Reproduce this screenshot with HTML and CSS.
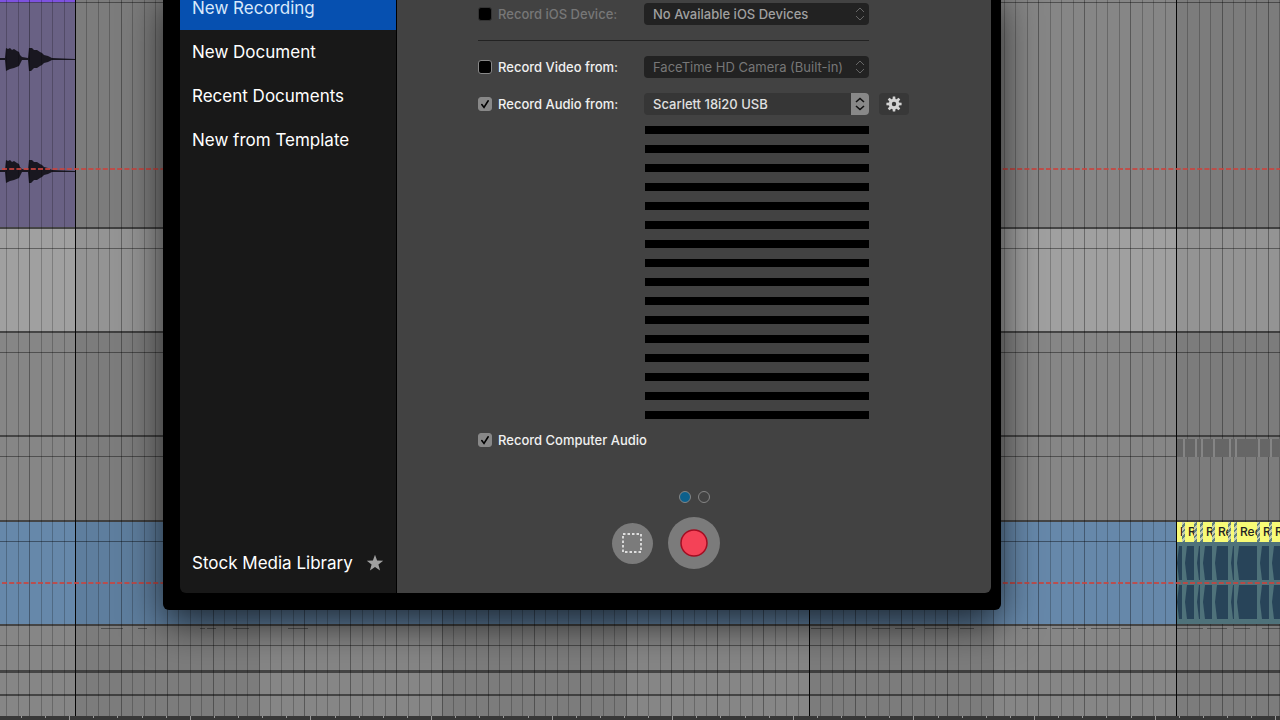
FILE: index.html
```html
<!DOCTYPE html>
<html lang="en">
<head>
	<meta charset="UTF-8">
	<meta name="viewport" content="width=device-width, initial-scale=1.0">
	<title>New Recording</title>
	<link rel="stylesheet" href="styles.css">
</head>
<body>

	<!-- arrangement behind the window -->
	<div class="arrange">
		<div class="track track--tall">
			<div class="track__head track__head--cut"></div>
			<div class="purple">
				<div class="purple__head"></div>
				<svg class="purple__wave" width="75" height="224" viewBox="0 3 75 224">
					<defs>
						<path id="wave" d="M0-1H5L6-11L8-10L10-11L12-9L14-10L17-8L19-7L20-4L22-2L28-1L29-11L32-11L34-9L37-9L40-7L42-6L44-4L48-3L52-1L75 0V1L52 1L48 3L44 4L42 6L40 7L37 9L34 9L31 12L29 12L28 1L22 1L20 5L19 7L14 9L10 10L8 11L6 12L5 1H0Z"/>
					</defs>
					<use href="#wave" y="59"/>
					<use href="#wave" y="171"/>
				</svg>
			</div>
		</div>
		<div class="track track--light"><div class="track__head"></div></div>
		<div class="track"><div class="track__head"></div></div>
		<div class="track track--mid">
			<div class="track__head"></div>
			<div class="clips clips--muted" id="muted"></div>
		</div>
		<div class="track track--blue">
			<div class="track__head"></div>
			<div class="clips" id="clips"></div>
		</div>
		<div class="track track--midi"><div class="track__head"></div></div>
		<div class="track track--short"></div>
		<div class="track track--short track--last"></div>
		<div class="arrange__foot"></div>
		<svg class="grid" id="grid"></svg>
	</div>

	<div class="window">
		<nav class="sidebar">
			<a class="sidebar__item sidebar__item--on" href="#">New Recording</a>
			<a class="sidebar__item" href="#">New Document</a>
			<a class="sidebar__item" href="#">Recent Documents</a>
			<a class="sidebar__item" href="#">New from Template</a>
			<a class="sidebar__item sidebar__item--stock" href="#">Stock Media Library
				<svg width="18" height="18" viewBox="0 0 18 18"><path fill="#a0a0a0" d="M9 .8L11.1 6.6L17.2 6.8L12.4 10.6L14.1 16.5L9 13.1L3.9 16.5L5.6 10.6L.8 6.8L6.9 6.6Z"/></svg>
			</a>
		</nav>

		<main class="panel">
			<form class="form">
				<div class="row">
					<label class="check check--off"><input type="checkbox" disabled>Record iOS Device:</label>
					<div class="pick pick--empty">
						<select disabled aria-label="iOS device"><option>No Available iOS Devices</option></select>
						<svg class="pick__arrows" viewBox="0 0 18 22"><path d="M5 9L9 5L13 9M5 13L9 17L13 13"/></svg>
					</div>
				</div>
				<hr class="line">
				<div class="row">
					<label class="check"><input type="checkbox">Record Video from:</label>
					<div class="pick pick--off">
						<select disabled aria-label="Video source"><option>FaceTime HD Camera (Built-in)</option></select>
						<svg class="pick__arrows" viewBox="0 0 18 22"><path d="M5 9L9 5L13 9M5 13L9 17L13 13"/></svg>
					</div>
				</div>
				<div class="row">
					<label class="check"><input type="checkbox" checked><svg class="check__tick" viewBox="0 0 14 14"><path d="M3.8 7.6L6 10.4L10.2 3.8"/></svg>Record Audio from:</label>
					<div class="pick">
						<select aria-label="Audio source"><option>Scarlett 18i20 USB</option></select>
						<svg class="pick__arrows" viewBox="0 0 18 22"><path d="M5 9L9 5.5L13 9M5 13L9 16.5L13 13"/></svg>
					</div>
					<button class="gear" type="button" aria-label="Audio settings">
						<svg width="16" height="16" viewBox="-8 -8 16 16">
							<g fill="#d4d4d4">
								<path id="tooth" d="M-1.6-4L-1.2-7.6H1.2L1.6-4Z"/>
								<use href="#tooth" transform="rotate(45)"/>
								<use href="#tooth" transform="rotate(90)"/>
								<use href="#tooth" transform="rotate(135)"/>
								<use href="#tooth" transform="rotate(180)"/>
								<use href="#tooth" transform="rotate(225)"/>
								<use href="#tooth" transform="rotate(270)"/>
								<use href="#tooth" transform="rotate(315)"/>
							</g>
							<circle r="3.7" fill="none" stroke="#d4d4d4" stroke-width="3"/>
						</svg>
					</button>
				</div>
				<div class="meters" id="meters"></div>
				<div class="row">
					<label class="check"><input type="checkbox" checked><svg class="check__tick" viewBox="0 0 14 14"><path d="M3.8 7.6L6 10.4L10.2 3.8"/></svg>Record Computer Audio</label>
				</div>
			</form>

			<div class="dots">
				<span class="dot dot--on"></span>
				<span class="dot"></span>
			</div>

			<div class="actions">
				<button class="round round--area" type="button" aria-label="Select area">
					<svg width="21" height="21" viewBox="0 0 21 21"><rect x="1" y="1" width="18" height="18" fill="none" stroke="#fff" stroke-width="1.4" stroke-dasharray="2.5 2"/></svg>
				</button>
				<button class="round round--rec" type="button" aria-label="Record">
					<svg width="28" height="28" viewBox="0 0 28 28"><circle cx="14" cy="14" r="13" fill="#f44257" stroke="#a30d22" stroke-width="1.5"/></svg>
				</button>
			</div>
		</main>
	</div>

	<script src="script.js"></script>
</body>
</html>
```
FILE: styles.css
```css
* {
	margin: 0;
	padding: 0;
	box-sizing: border-box;
}

body {
	font-family: Inter, "Liberation Sans", sans-serif;
	background: #333;
	color: #fff;
	overflow: hidden;
}

/* ---- arrangement ---- */

.arrange {
	position: relative;
	display: flex;
	flex-direction: column;
	min-height: 100vh;
	overflow: hidden;
}

.track {
	position: relative;
	height: 104px;
	background: #868686;
	border-bottom: 2px solid #454545;
}

.track--tall {
	height: 229px;
}

.track--light {
	background: #a0a0a0;
}

.track--mid {
	height: 85px;
}

.track--blue {
	background: #6688aa;
}

.track--midi {
	height: 47px;
	border-bottom-width: 3px;
}

.track--short {
	height: 23px;
}

.track--last {
	height: 20px;
	border-bottom: 0;
}

.track__head {
	height: 20px;
	border-bottom: 1px solid rgba(0, 0, 0, .4);
}

.track__head--cut {
	height: 3px;
}

.arrange__foot {
	flex: 1;
	min-height: 3px;
	background: #383838;
}

.grid {
	position: absolute;
	inset: 0;
	width: 100%;
	height: 100%;
}

.purple {
	position: absolute;
	top: 0;
	left: 0;
	width: 75px;
	height: 100%;
	background: #696184;
}

.purple__head {
	height: 3px;
	background: #7d52df;
	border-bottom: 1px solid #4b4068;
}

.purple__wave {
	display: block;
	fill: #191720;
}

/* clips lie over the track and its grid */
.clips {
	position: absolute;
	z-index: 1;
	top: 0;
	bottom: 0;
	left: 1177px;
	right: 0;
	display: flex;
	overflow: hidden;
	background:
		repeating-linear-gradient(135deg, #c3cbb0 0 2px, #5f7f80 2px 4px) top / 100% 20px no-repeat,
		#4f727a;
}

.clips--muted {
	top: 2px;
	bottom: auto;
	height: 18px;
	background: #858585;
}

.clip {
	flex: none;
	display: flex;
	flex-direction: column;
	margin-right: 3px;
}

.clip__name {
	height: 20px;
	padding-left: 3px;
	overflow: hidden;
	background: #f8fb76;
	color: #222;
	font-size: 12px;
	font-weight: 500;
	line-height: 20px;
	margin-bottom: 4px;
}

.clip__wave {
	height: 34px;
	margin-bottom: 5px;
	background: #284459;
	clip-path: polygon(0 50%, 2px 0, 100% 0, 100% 100%, 2px 100%);
}

.clips--muted .clip {
	background: #666;
	margin-right: 2px;
}

/* ---- recording window ---- */

.window {
	position: absolute;
	z-index: 2;
	top: -14px;
	left: 163px;
	width: 838px;
	display: flex;
	padding: 0 10px 17px 17px;
	background: #000;
	border-radius: 6px;
	box-shadow: 0 14px 40px rgba(0, 0, 0, .7);
}

.sidebar {
	display: flex;
	flex-direction: column;
	width: 217px;
	padding-bottom: 8px;
	background: #181818;
	border-right: 1px solid #000;
	border-radius: 0 0 0 6px;
}

.sidebar__item {
	display: flex;
	align-items: center;
	height: 44px;
	padding: 0 12px;
	color: #fff;
	font-size: 17px;
	text-decoration: none;
	white-space: nowrap;
}

.sidebar__item--on {
	background: #0650b0;
	color: #d8e8fb;
}

.sidebar__item--stock {
	justify-content: space-between;
	margin-top: auto;
}

.panel {
	flex: 1;
	padding: 17px 0 24px;
	background: #424242;
	border-radius: 0 0 6px 0;
}

.form {
	display: flex;
	flex-direction: column;
	padding-left: 81px;
}

.row {
	display: flex;
	align-items: center;
	height: 22px;
	margin-bottom: 15px;
	font-size: 13px;
}

.line {
	width: 391px;
	margin-bottom: 15px;
	border: 0;
	border-top: 1px solid #222;
}

.check {
	position: relative;
	display: flex;
	align-items: center;
	gap: 6px;
	min-width: 166px;
	color: #f0f0f0;
	font-weight: 500;
	white-space: nowrap;
}

.check--off {
	color: #777;
}

.check input {
	appearance: none;
	flex: none;
	width: 14px;
	height: 14px;
	background: #000;
	border: 1px solid #888;
	border-radius: 3px;
}

.check input:disabled {
	border-color: #333;
}

.check input:checked {
	background: #888;
}

.check__tick {
	position: absolute;
	left: 0;
	width: 14px;
	height: 14px;
	fill: none;
	stroke: #000;
	stroke-width: 1.6;
	stroke-linecap: round;
}

.pick {
	position: relative;
	width: 225px;
	height: 22px;
}

.pick select {
	appearance: none;
	width: 100%;
	height: 100%;
	padding: 0 9px;
	background: #363636;
	border: 0;
	border-radius: 4px;
	color: #e0e0e0;
	font: 500 13px Inter, "Liberation Sans", sans-serif;
	opacity: 1;
}

.pick--empty select,
.pick--off select {
	background: #222;
	color: #a0a0a0;
}

.pick--off select {
	color: #777;
	font-weight: 400;
}

.pick__arrows {
	position: absolute;
	top: 0;
	right: 0;
	width: 18px;
	height: 22px;
	fill: none;
	stroke: #111;
	stroke-width: 1.6;
	background: #888;
	border-radius: 0 4px 4px 0;
	pointer-events: none;
}

.pick--empty .pick__arrows,
.pick--off .pick__arrows {
	background: none;
	stroke: #666;
	stroke-width: 1;
}

.gear {
	display: flex;
	align-items: center;
	justify-content: center;
	width: 30px;
	height: 22px;
	margin-left: 10px;
	background: #383838;
	border: 0;
	border-radius: 4px;
}

.meters {
	display: flex;
	flex-direction: column;
	gap: 11px;
	width: 224px;
	margin: -4px 0 10px 167px;
}

.meter {
	height: 8px;
	background: #000;
}

.dots {
	display: flex;
	justify-content: center;
	gap: 7px;
	margin: 25px 0 14px;
}

.dot {
	width: 12px;
	height: 12px;
	border: 1px solid #858585;
	border-radius: 50%;
}

.dot--on {
	background: #0d608c;
}

.actions {
	display: grid;
	grid-template-columns: 1fr auto 1fr;
	align-items: center;
	gap: 15px;
}

.round {
	display: flex;
	align-items: center;
	justify-content: center;
	background: #7b7b7b;
	border: 0;
	border-radius: 50%;
}

.round--area {
	justify-self: end;
	width: 41px;
	height: 41px;
}

.round--rec {
	width: 52px;
	height: 52px;
}

/* volume automation, above the clips */
.automation {
	position: absolute;
	z-index: 1;
	left: 0;
	top: 0;
	width: 100%;
	height: 100%;
	stroke: #c9453f;
	stroke-width: 2;
	stroke-dasharray: 5 2.2;
	opacity: .85;
}
```
FILE: script.js
```js
const BAR = 367;        // width of one bar
const ORIGIN = 75;      // x of the first bar line in view

const clipData = [
	[5, "R"], [9, "R"], [3, ""], [9, "R"], [13, "Re"],
	[3, ""], [20, "Rec"], [9, "R"], [20, "Rec"]
];

function drawGrid() {
	const w = window.innerWidth;
	let out = "";

	// the first half of every bar is darker
	for (let x = ORIGIN; x < w; x += BAR) {
		out += `<rect x="${x}" width="${Math.round(BAR / 2)}" height="716" fill="#000" opacity=".07"/>`;
	}

	for (let i = -6; ORIGIN + i * BAR / 32 < w; i++) {
		const x = Math.round(ORIGIN + i * BAR / 32);
		out += `<rect x="${x}" width="1" height="716" fill="#000" opacity="${i % 4 ? .22 : .34}"/>`;
	}

	[0, 2, 3].forEach(n => {
		out += `<rect x="${ORIGIN + n * BAR}" width="1" height="716" fill="#050505"/>`;
	});

	// notes of the midi track
	[[101, 22], [138, 9], [200, 5], [207, 9], [233, 16], [288, 20], [811, 22], [872, 18], [895, 20], [925, 24],
	 [960, 14], [1022, 8], [1032, 15], [1052, 24], [1078, 8], [1091, 28], [1121, 10], [1177, 26], [1207, 20], [1234, 16], [1262, 18]].forEach(n => {
		out += `<rect x="${n[0]}" y="628" width="${n[1]}" height="1" fill="#000" opacity=".35"/>`;
	});

	for (let i = 0; i * 24 < w; i++) {
		out += `<rect x="${Math.round(21 + i * 24.12)}" y="716" width="1" height="${i % 5 == 2 ? 4 : 2}" fill="#999"/>`;
	}

	grid.innerHTML = out;
}

function drawAutomation() {
	document.querySelectorAll(".track--tall, .track--blue").forEach(track => {
		const y = track.classList.contains("track--tall") ? 169 : 61;
		track.insertAdjacentHTML("beforeend", `<svg class="automation"><line x1="2" x2="100%" y1="${y}" y2="${y}"/></svg>`);
	});
}

function drawClips() {
	clipData.forEach(c => {
		clips.innerHTML += `<div class="clip" style="width:${c[0]}px"><div class="clip__name">${c[1]}</div><div class="clip__wave"></div><div class="clip__wave"></div></div>`;
		muted.innerHTML += `<div class="clip" style="width:${c[0] + 1}px"></div>`;
	});
}

for (let i = 0; i < 16; i++) {
	meters.innerHTML += '<div class="meter"></div>';
}

drawGrid();
drawClips();
drawAutomation();
window.addEventListener("resize", drawGrid);
```
